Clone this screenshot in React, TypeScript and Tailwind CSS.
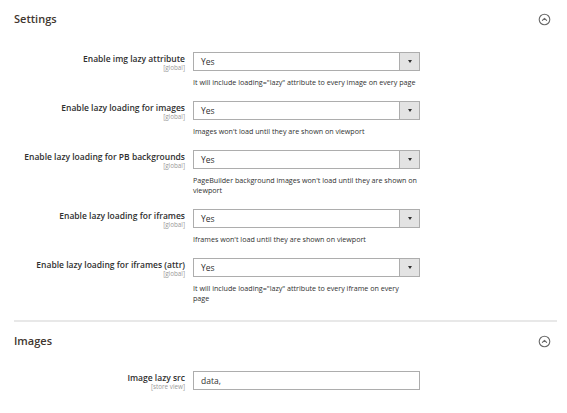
import React from 'react';

type Row = {
  label: string;
  scope: string;
  note?: string;
};

const settingsRows: Row[] = [
  {
    label: 'Enable img lazy attribute',
    scope: '[global]',
    note: 'It will include loading="lazy" attribute to every image on every page',
  },
  {
    label: 'Enable lazy loading for images',
    scope: '[global]',
    note: "Images won't load until they are shown on viewport",
  },
  {
    label: 'Enable lazy loading for PB backgrounds',
    scope: '[global]',
    note: "PageBuilder background images won't load until they are shown on viewport",
  },
  {
    label: 'Enable lazy loading for iframes',
    scope: '[global]',
    note: "Iframes won't load until they are shown on viewport",
  },
  {
    label: 'Enable lazy loading for iframes (attr)',
    scope: '[global]',
    note: 'It will include loading="lazy" attribute to every iframe on every\npage',
  },
];

function CollapseIcon() {
  return (
    <svg width="13" height="13" viewBox="0 0 13 13" fill="none">
      <circle cx="6.5" cy="6.5" r="5.3" stroke="#6b6b6b" strokeWidth="1.1" />
      <path d="M4.4 7.4 L6.5 5.3 L8.6 7.4" stroke="#6b6b6b" strokeWidth="1.1" strokeLinecap="round" strokeLinejoin="round" />
    </svg>
  );
}

function SectionHeader({ title }: { title: string }) {
  return (
    <div className="flex items-center justify-between h-[38px] pr-[6px]">
      <h2 className="text-[11px] font-semibold text-[#41362f]">{title}</h2>
      <CollapseIcon />
    </div>
  );
}

function Label({ label, scope }: { label: string; scope: string }) {
  return (
    <div className="w-[171px] shrink-0 text-right pt-[1px]">
      <div className="text-[8.5px] font-semibold leading-[11px] text-[#303030]">{label}</div>
      <div className="text-[6.3px] leading-[8px] text-[#999999]">{scope}</div>
    </div>
  );
}

function SelectRow({ row }: { row: Row }) {
  return (
    <div className="flex gap-[8px] pb-[14px]">
      <Label label={row.label} scope={row.scope} />
      <div className="w-[227px]">
        <div className="flex h-[19px] border border-[#adadad] bg-white">
          <span className="flex-1 pl-[7px] text-[8.5px] leading-[17px] text-[#303030]">Yes</span>
          <span className="w-[20px] flex items-center justify-center bg-[#e3e3e3] border-l border-[#adadad]">
            <span className="w-0 h-0 border-l-[2.5px] border-r-[2.5px] border-t-[3px] border-l-transparent border-r-transparent border-t-[#303030]" />
          </span>
        </div>
        {row.note && (
          <p className="mt-[6px] text-[7.15px] leading-[10px] text-[#303030] whitespace-pre-line">{row.note}</p>
        )}
      </div>
    </div>
  );
}

export default function App() {
  return (
    <div className="w-[567px] h-[413px] bg-white pl-[14px] pr-[10px] overflow-hidden" style={{ fontFamily: '"Open Sans", "Liberation Sans", sans-serif' }}>
      {/* Settings */}
      <SectionHeader title="Settings" />
      <div className="pt-[14px] pb-[3px]">
        {settingsRows.map((row) => (
          <SelectRow key={row.label} row={row} />
        ))}
      </div>

      <div className="h-[2px] bg-[#e8e8e8]" />

      {/* Images */}
      <SectionHeader title="Images" />
      <div className="pt-[11px] flex gap-[8px]">
        <Label label="Image lazy src" scope="[store view]" />
        <div className="w-[227px] h-[19px] border border-[#adadad] pl-[7px] text-[8.5px] leading-[17px] text-[#303030]">
          data,
        </div>
      </div>
    </div>
  );
}
